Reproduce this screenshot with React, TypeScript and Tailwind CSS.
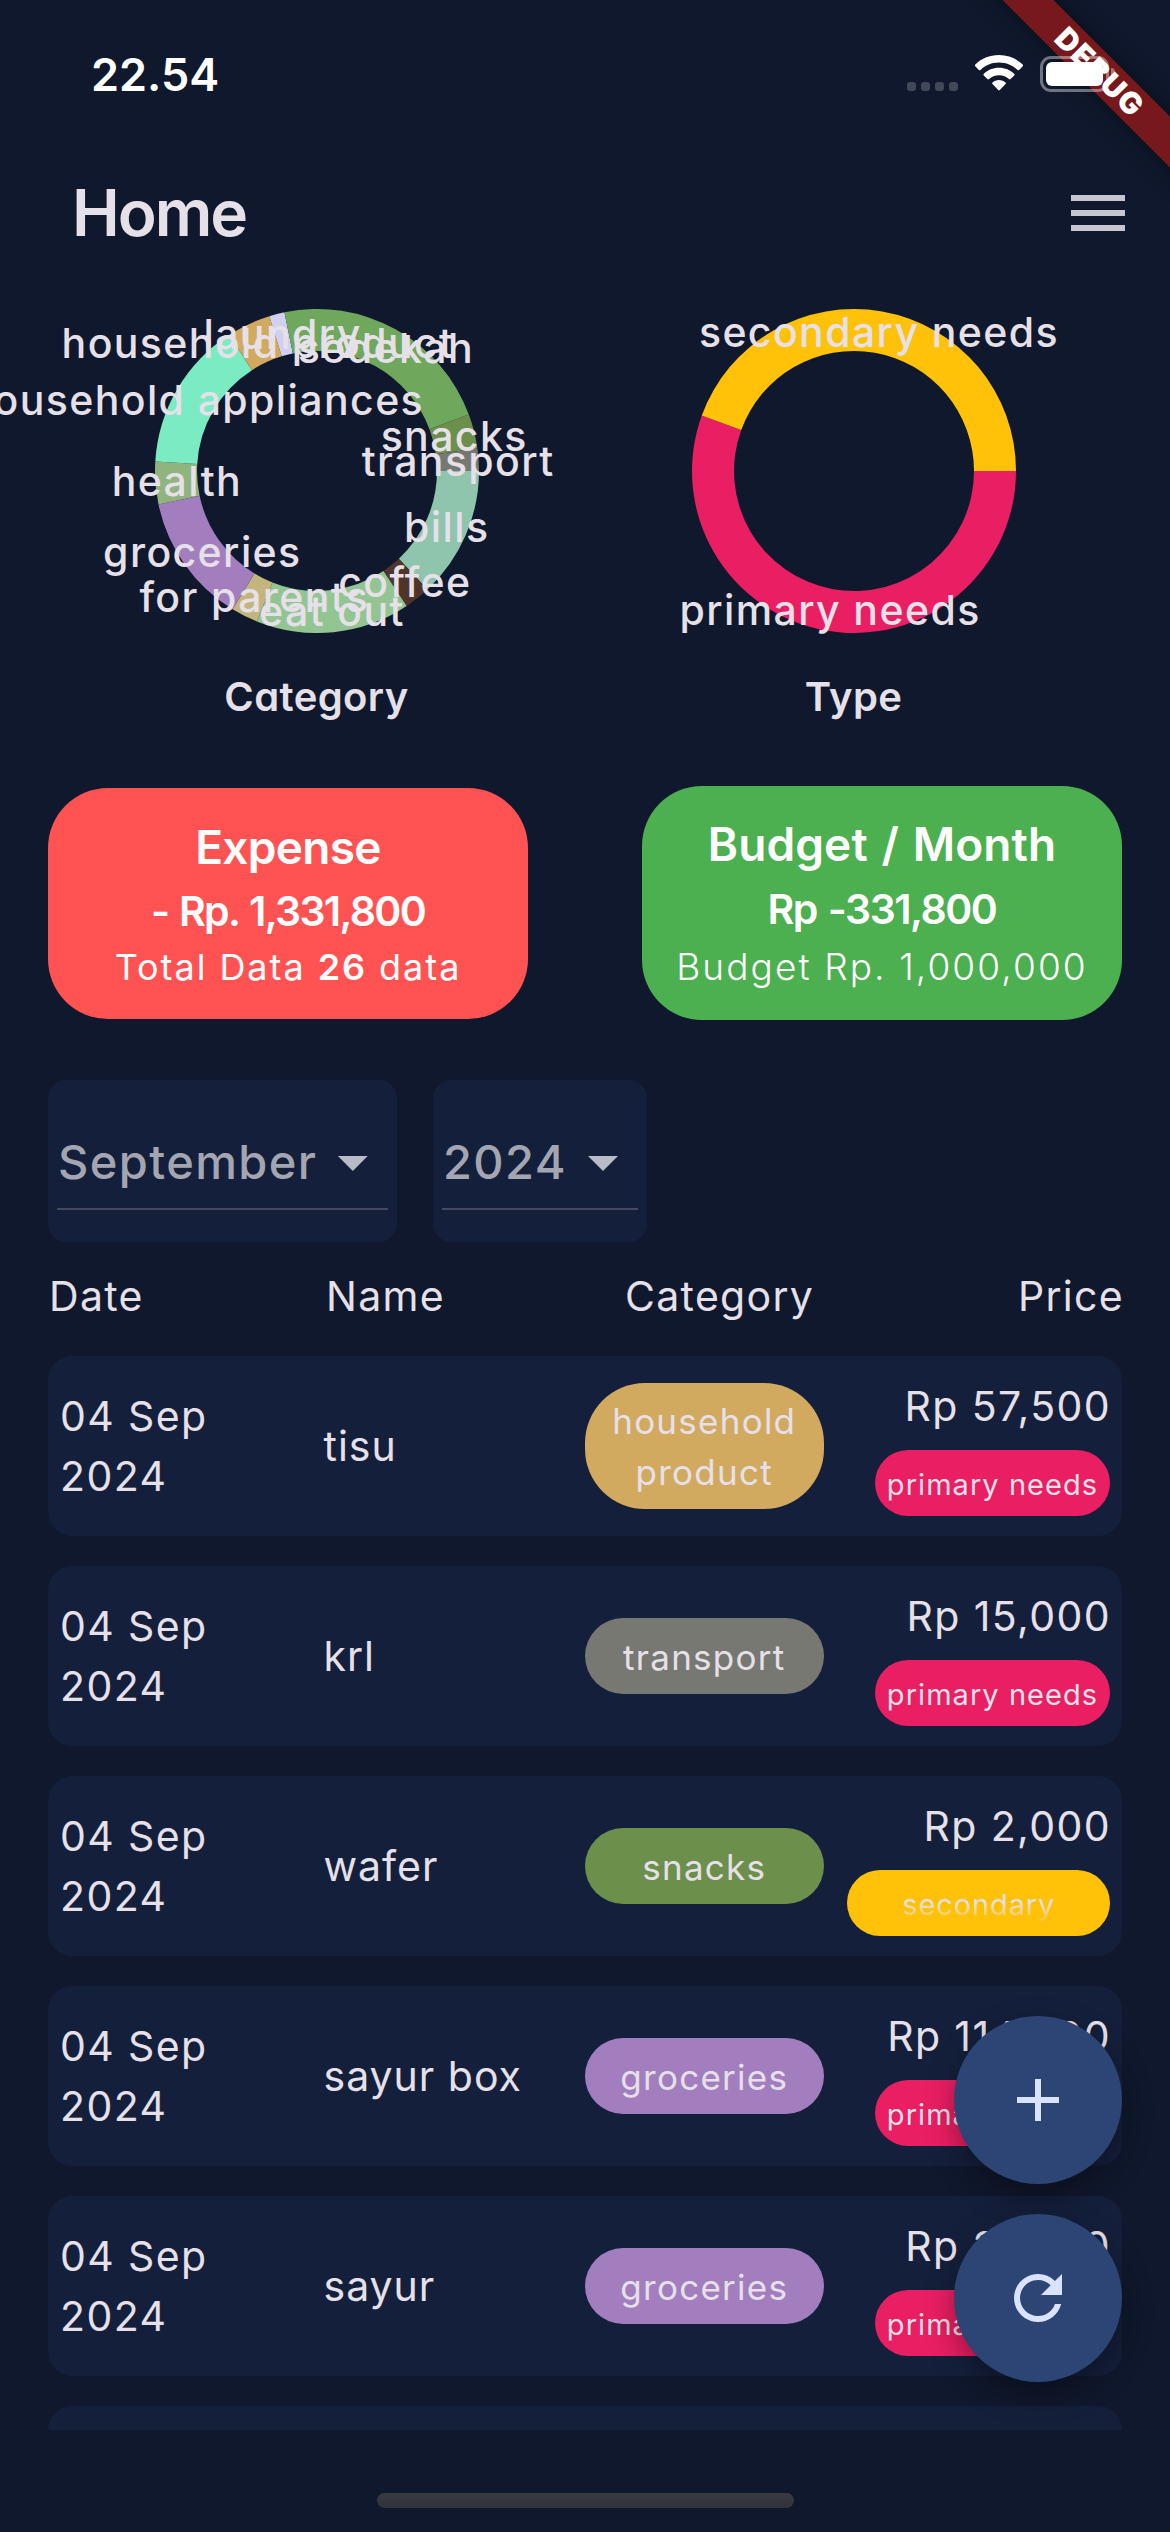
import React from "react";
import { MdAdd, MdArrowDropDown, MdMenu, MdRefresh } from "react-icons/md";

type Slice = { label: string; from: number; to: number; color: string };

const categorySlices: Slice[] = [
  { label: "bills", from: 0, to: 47, color: "#8fc4ad" },
  { label: "coffee", from: 47, to: 56.4, color: "#4e342b" },
  { label: "eat out", from: 56.4, to: 111.8, color: "#93c592" },
  { label: "for parents", from: 111.8, to: 121.4, color: "#c3b67c" },
  { label: "groceries", from: 121.4, to: 168.1, color: "#a27ebe" },
  { label: "health", from: 168.1, to: 183.4, color: "#91b37e" },
  { label: "household appliances", from: 183.4, to: 237.2, color: "#7aebc3" },
  { label: "household product", from: 237.2, to: 252.9, color: "#d1aa5f" },
  { label: "laundry", from: 252.9, to: 258.4, color: "#d1cff2" },
  { label: "sedekah", from: 258.4, to: 339.6, color: "#6fa75d" },
  { label: "snacks", from: 339.6, to: 352, color: "#6c8f4c" },
  { label: "transport", from: 352, to: 360, color: "#777871" },
];

const typeSlices: Slice[] = [
  { label: "primary needs", from: 0, to: 200, color: "#ea1e63" },
  { label: "secondary needs", from: 200, to: 360, color: "#ffc209" },
];

const SIZE = 324;
const CENTER = SIZE / 2;
const OUTER = 162;
const INNER = 120;

function point(radius: number, degrees: number) {
  const a = (degrees * Math.PI) / 180;
  return { x: CENTER + radius * Math.cos(a), y: CENTER + radius * Math.sin(a) };
}

function arcPath({ from, to }: Slice) {
  const a = point(OUTER, from);
  const b = point(OUTER, to);
  const c = point(INNER, to);
  const d = point(INNER, from);
  const large = to - from > 180 ? 1 : 0;
  return `M${a.x} ${a.y}A${OUTER} ${OUTER} 0 ${large} 1 ${b.x} ${b.y}L${c.x} ${c.y}A${INNER} ${INNER} 0 ${large} 0 ${d.x} ${d.y}Z`;
}

function Donut({ title, slices }: { title: string; slices: Slice[] }) {
  return (
    <div className="flex flex-1 flex-col items-center">
      <div className="relative h-[324px] w-[324px]">
        <svg viewBox="0 0 324 324" className="h-full w-full">
          {slices.map((s) => (
            <path key={s.label} d={arcPath(s)} fill={s.color} />
          ))}
        </svg>
        {slices.map((s) => {
          const p = point((OUTER + INNER) / 2, (s.from + s.to) / 2);
          return (
            <span
              key={s.label}
              className="absolute ml-px -translate-x-1/2 -translate-y-1/2 text-[41px] leading-[60px] font-[450] tracking-[1.4px] whitespace-nowrap"
              style={{ left: p.x, top: p.y }}
            >
              {s.label}
            </span>
          );
        })}
      </div>
      <h2 className="mt-[34px] text-[40px] leading-[60px] font-semibold tracking-[0.4px] [font-feature-settings:'cv11']">{title}</h2>
    </div>
  );
}

function StatusBar() {
  return (
    <div className="flex h-[129px] shrink-0 items-start justify-between pt-[44px] pr-[55px] pl-[91px]">
      <span className="text-[45px] leading-[61px] font-semibold text-white">22.54</span>
      <div className="relative z-20 flex items-start pt-[11px]">
        <div className="mt-[27px] flex gap-[5px]">
          <i className="h-[9px] w-[9px] rounded-[3px] bg-[#424857]" />
          <i className="h-[9px] w-[9px] rounded-[3px] bg-[#424857]" />
          <i className="h-[9px] w-[9px] rounded-[3px] bg-[#424857]" />
          <i className="h-[9px] w-[9px] rounded-[3px] bg-[#424857]" />
        </div>
        <svg viewBox="0 0 48 36" className="ml-[17px] h-[36px] w-[48px] fill-white">
          <path d="M24 0C33.500 0 42 3.700 47.700 9.600c.5.500.5 1.200 0 1.700l-3.500 3.600c-.5.500-1.200.5-1.700 0C37.600 10.200 31.200 7.500 24 7.500S10.400 10.200 5.500 14.900c-.5.500-1.200.5-1.700 0L.300 11.300c-.5-.5-.5-1.200 0-1.700C6 3.700 14.500 0 24 0Z" />
          <path d="M24 12.800c6 0 11.300 2.300 15.200 6 .5.500.5 1.200 0 1.700l-3.600 3.600c-.5.500-1.100.5-1.600 0-2.600-2.400-6.100-3.900-10-3.900s-7.400 1.500-10 3.900c-.5.500-1.100.5-1.600 0l-3.600-3.600c-.5-.5-.5-1.200 0-1.700 3.900-3.700 9.200-6 15.200-6Z" />
          <path d="M24 25c2.500 0 4.800.9 6.500 2.500.5.500.5 1.200 0 1.600l-5.700 6c-.5.500-1.100.5-1.600 0l-5.700-6c-.5-.4-.5-1.100 0-1.600C19.200 25.900 21.500 25 24 25Z" />
        </svg>
        <div className="mt-px ml-[17px] flex h-[36px] w-[69px] rounded-[11px] border-[3px] border-white/40 p-[3px]">
          <div className="h-full w-[57px] rounded-[6px] bg-white" />
        </div>
        <div className="mt-[13px] ml-[2px] h-[12px] w-[4px] rounded-r-full bg-white/40" />
      </div>
    </div>
  );
}

function Dropdown({ value, className }: { value: string; className: string }) {
  return (
    <button className={`flex h-[162px] items-start rounded-[18px] bg-[#141f3b] px-[9px] ${className}`}>
      <span className="mt-9 flex h-[94px] w-full items-center justify-between border-b-2 border-[#434a5f]">
        <span className="pl-px text-[47px] leading-[72px] font-[450] tracking-[1.4px] text-[#a3a6b1]">{value}</span>
        <MdArrowDropDown className="-mr-px h-[72px] w-[72px] text-[#b8bcc6]" />
      </span>
    </button>
  );
}

type Entry = { name: string; category: string; tone: string; price: string; secondary?: boolean };

const entries: Entry[] = [
  { name: "tisu", category: "household product", tone: "bg-[#d1aa5f]", price: "Rp 57,500" },
  { name: "krl", category: "transport", tone: "bg-[#777871]", price: "Rp 15,000" },
  { name: "wafer", category: "snacks", tone: "bg-[#6c8f4c]", price: "Rp 2,000", secondary: true },
  { name: "sayur box", category: "groceries", tone: "bg-[#a27ebe]", price: "Rp 114,000" },
  { name: "sayur", category: "groceries", tone: "bg-[#a27ebe]", price: "Rp 21,000" },
];

function EntryRow({ entry }: { entry: Entry }) {
  return (
    <div className="grid h-[180px] shrink-0 grid-cols-4 items-center rounded-[24px] bg-[#141f3b] px-3 text-[41px] leading-[60px] tracking-[1.4px]">
      <div className="w-[180px]">04 Sep 2024</div>
      <div className="pl-px tracking-[1px] whitespace-nowrap">{entry.name}</div>
      <div className="pr-[24px]">
        <div
          className={`flex min-h-[76px] items-center justify-center rounded-[60px] px-[24px] pt-[13px] pb-[11px] text-center text-[35px] leading-[51px] tracking-[1.25px] ${entry.tone}`}
        >
          {entry.category}
        </div>
      </div>
      <div className="flex flex-col items-end">
        <div className="-mr-px">{entry.price}</div>
        {entry.secondary ? (
          <div className="mt-[14px] h-[66px] w-[263px] rounded-full bg-[#ffc209] pt-[13px] text-center text-[29px] leading-[44px] tracking-[0.9px]">
            <span className="block [mask-image:linear-gradient(to_bottom,black_45%,transparent_95%)]">secondary</span>
          </div>
        ) : (
          <div className="mt-[14px] h-[66px] w-[235px] rounded-full bg-[#ea1e63] pt-[13px] text-center text-[29px] leading-[44px] tracking-[1.05px] whitespace-nowrap">
            primary needs
          </div>
        )}
      </div>
    </div>
  );
}

export default function App() {
  return (
    <div className="relative flex h-[2532px] w-[1170px] flex-col overflow-hidden bg-[#0f182c] font-['Inter',sans-serif] text-[#e6e0e9]">
      <StatusBar />
      <header className="flex h-[168px] shrink-0 items-center justify-between pr-[36px] pl-[72px]">
        <h1 className="text-[64px] leading-[84px] font-semibold tracking-[-2px]">Home</h1>
        <MdMenu className="h-[72px] w-[72px] text-[#c6c6d0]" />
      </header>

      <section className="flex px-12 pt-3">
        <Donut title="Category" slices={categorySlices} />
        <Donut title="Type" slices={typeSlices} />
      </section>

      <section className="mt-[59px] flex h-[234px] shrink-0 items-center justify-between px-12 text-center text-white">
        <div className="h-[231px] w-[480px] rounded-[60px] bg-[#ff5353] pt-[27px]">
          <div className="text-[46px] leading-[64px] font-semibold tracking-[-0.7px]">Expense</div>
          <div className="text-[41px] leading-[65px] font-semibold tracking-[-1.7px] [word-spacing:2px]">- Rp. 1,331,800</div>
          <div className="text-[36px] leading-[47px] tracking-[1.95px]">
            Total Data <b className="font-semibold">26</b> data
          </div>
        </div>
        <div className="h-[234px] w-[480px] rounded-[60px] bg-[#4caf50] pt-[26px]">
          <div className="text-[46px] leading-[64px] font-semibold tracking-[0.1px] [font-feature-settings:'cv11'] [word-spacing:2px]">Budget / Month</div>
          <div className="text-[41px] leading-[66px] font-semibold tracking-[-1.5px] [word-spacing:2px]">Rp -331,800</div>
          <div className="text-[37px] leading-[50px] font-[350] tracking-[2.1px]">Budget Rp. 1,000,000</div>
        </div>
      </section>

      <section className="mt-[60px] flex shrink-0 gap-9 px-12">
        <Dropdown value="September" className="w-[349px]" />
        <Dropdown value="2024" className="w-[214px]" />
      </section>

      <div className="mt-6 grid shrink-0 grid-cols-[278px_299px_1fr_auto] pr-[46px] pl-12 text-[41px] leading-[60px] tracking-[1.3px]">
        <span className="pl-px">Date</span>
        <span>Name</span>
        <span>Category</span>
        <span>Price</span>
      </div>

      <main className="mt-[30px] flex h-[1074px] shrink-0 flex-col gap-[30px] overflow-hidden px-12">
        {entries.map((entry) => (
          <EntryRow key={entry.name} entry={entry} />
        ))}
        <div className="h-[180px] shrink-0 rounded-[24px] bg-[#141f3b]" />
      </main>

      <footer className="flex justify-center pt-[63px]">
        <div className="h-[15px] w-[417px] rounded-full bg-linear-to-b from-[#3a3b41] to-[#2e323b]" />
      </footer>

      <div className="absolute right-12 bottom-[150px] flex flex-col gap-[30px] text-[#d9e2ff]">
        <button className="flex h-[168px] w-[168px] items-center justify-center rounded-full bg-[#2c4575] shadow-[0_12px_30px_rgba(0,0,0,0.35)]">
          <MdAdd className="h-[72px] w-[72px]" />
        </button>
        <button className="flex h-[168px] w-[168px] items-center justify-center rounded-full bg-[#2c4575] shadow-[0_12px_30px_rgba(0,0,0,0.35)]">
          <MdRefresh className="h-[72px] w-[72px]" />
        </button>
      </div>

      <div className="absolute top-[54px] left-[900px] z-10 flex h-[36px] w-[400px] rotate-45 items-center justify-center bg-[#77191c] text-[30px] leading-none font-black tracking-[1.5px] text-white shadow-[0_0_20px_rgba(0,0,0,0.5)]">
        DEBUG
      </div>
    </div>
  );
}
